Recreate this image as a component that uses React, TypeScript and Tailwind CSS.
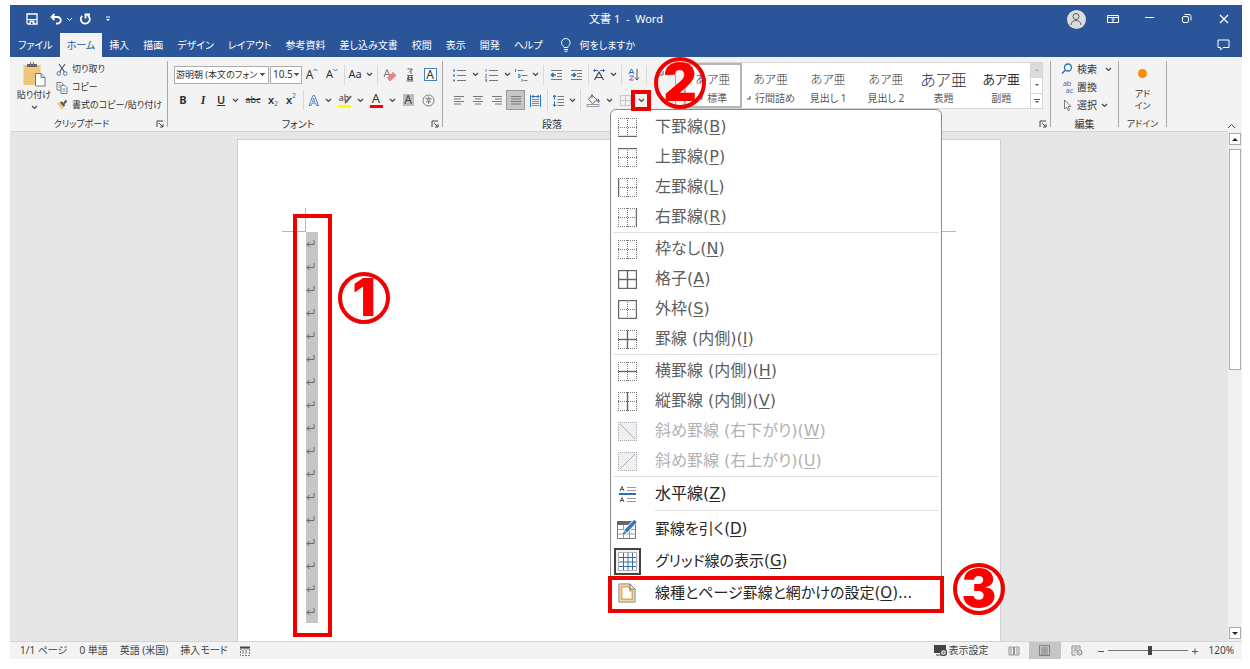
import React from 'react';

const TABS = ['ファイル', 'ホーム', '挿入', '描画', 'デザイン', 'レイアウト', '参考資料', '差し込み文書', '校閲', '表示', '開発', 'ヘルプ'];

const STYLES = [
  { name: '標準', sample: 'text-xs font-light', mark: true },
  { name: '行間詰め', sample: 'text-xs font-light', mark: true },
  { name: '見出し 1', sample: 'text-xs font-light' },
  { name: '見出し 2', sample: 'text-xs font-light' },
  { name: '表題', sample: 'text-base font-light' },
  { name: '副題', sample: 'text-[13px] font-normal' },
];

/* ---------- small shared pieces ---------- */

const Icon: React.FC<{ w?: number; h?: number; className?: string; children: React.ReactNode }> = ({
  w = 14,
  h = 14,
  className = '',
  children,
}) => (
  <svg width={w} height={h} viewBox={`0 0 ${w} ${h}`} fill="none" stroke="#5c5c5c" className={`shrink-0 ${className}`} aria-hidden="true">
    {children}
  </svg>
);

const Chevron = () => (
  <Icon w={7} h={5}>
    <path d="M1 1l2.5 2.5L6 1" stroke="#444" strokeWidth="1.2" />
  </Icon>
);

const Tool: React.FC<{ label: string; className?: string; children: React.ReactNode }> = ({ label, className = 'w-5', children }) => (
  <button type="button" aria-label={label} className={`flex h-5 shrink-0 items-center justify-center ${className}`}>
    {children}
  </button>
);

const More: React.FC<{ label: string }> = ({ label }) => (
  <Tool label={label} className="w-3">
    <Chevron />
  </Tool>
);

const Divider = () => <span className="mx-0.5 h-5 w-px shrink-0 bg-[#d8d8d8]" />;

const Group: React.FC<{ title?: string; launcher?: boolean; className?: string; children: React.ReactNode }> = ({
  title,
  launcher,
  className = '',
  children,
}) => (
  <section className={`my-1 flex shrink-0 flex-col border-r border-[#a9a9a9] ${className}`}>
    <div className="flex-1">{children}</div>
    <div className="flex h-1.5 items-center justify-end">
      {title && <span className="flex-1 text-center">{title}</span>}
      {launcher && (
        <button type="button" aria-label="ダイアログを表示" className="flex w-3.5 justify-center">
          <Icon w={8} h={8}>
            <path d="M7 1H1v6M3 3l4 4M7 4v3H4" stroke="#444" />
          </Icon>
        </button>
      )}
    </div>
  </section>
);

const Circle: React.FC<{ n: number; className: string }> = ({ n, className }) => (
  <span
    className={`absolute z-20 flex size-[52px] items-center justify-center rounded-full border-4 border-[#f00000] font-['Inter'] text-[52px] leading-none font-black text-[#ff0000] ${className}`}
  >
    {n}
  </span>
);

/* ---------- title bar ---------- */

const TitleBar = () => (
  <header className="bg-[#2a5699] text-white">
    <div className="grid h-7 grid-cols-3 items-center">
      <div className="flex items-center pl-4">
        <button type="button" aria-label="上書き保存" className="mr-3">
          <Icon w={12} h={12}>
            <path d="M1 1h10v10H2L1 10z" stroke="#fff" strokeWidth="1.3" />
            <path d="M1 6.5h10" stroke="#fff" />
            <path d="M3.5 7.5h5v3.5h-5z" fill="#fff" stroke="none" />
            <path d="M5 9h1.5v2H5z" fill="#2a5699" stroke="none" />
          </Icon>
        </button>
        <button type="button" aria-label="元に戻す">
          <Icon w={12} h={12}>
            <path d="M4.5 1L1.5 4l3 3M2 4h5.5a3 3 0 010 6.5H6" stroke="#fff" strokeWidth="1.8" />
          </Icon>
        </button>
        <button type="button" aria-label="元に戻すの履歴" className="mx-1">
          <Icon w={7} h={5}>
            <path d="M1 1l2.5 2.5L6 1" stroke="#fff" />
          </Icon>
        </button>
        <button type="button" aria-label="やり直し" className="ml-0.5">
          <Icon w={12} h={12}>
            <path d="M3.2 2.8A4.5 4.5 0 108.5 2.2M6.5 5.5V1.5H11" stroke="#fff" strokeWidth="1.8" />
          </Icon>
        </button>
        <button type="button" aria-label="クイック アクセス ツール バーのユーザー設定" className="ml-3.5">
          <Icon w={6} h={6}>
            <path d="M1 1h4" stroke="#fff" />
            <path d="M1 3h4L3 5z" fill="#fff" stroke="none" />
          </Icon>
        </button>
      </div>
      <h1 className="text-center text-[11px] whitespace-pre">文書 1  -  Word</h1>
      <div className="flex items-center justify-end gap-[21px] pr-3">
        <button type="button" aria-label="アカウント" className="flex size-[19px] items-center justify-center rounded-full bg-[#dcdcdc]">
          <Icon w={14} h={14}>
            <circle cx="7" cy="4.5" r="3" />
            <path d="M2 13c0-6 10-6 10 0" />
          </Icon>
        </button>
        <button type="button" aria-label="リボンの表示オプション">
          <Icon w={12} h={10}>
            <path d="M.5 1.5h11v7H.5zM.5 3.5h11M6 8V5M4.5 6L6 4.5 7.5 6" stroke="#fff" />
          </Icon>
        </button>
        <button type="button" aria-label="最小化" className="ml-1">
          <Icon w={12} h={10}>
            <path d="M1 3.5h9" stroke="#fff" />
          </Icon>
        </button>
        <button type="button" aria-label="元に戻す (縮小)" className="ml-1">
          <Icon w={12} h={10}>
            <rect x="1.5" y="2.5" width="6" height="6" rx="1.5" stroke="#fff" />
            <path d="M3.5.5h4.500q2 0 2 2v4" stroke="#fff" />
          </Icon>
        </button>
        <button type="button" aria-label="閉じる" className="ml-1">
          <Icon w={12} h={10}>
            <path d="M2 1l8 8M10 1L2 9" stroke="#fff" strokeWidth="1.2" />
          </Icon>
        </button>
      </div>
    </div>
    <nav className="flex h-6 items-stretch pl-px">
      {TABS.map((tab) => (
        <button
          key={tab}
          type="button"
          className={`px-[7px] whitespace-nowrap ${tab === 'ホーム' ? 'bg-[#f3f3f3] text-[#2a5699]' : ''}`}
        >
          {tab}
        </button>
      ))}
      <button type="button" className="ml-2.5 flex items-center gap-2 whitespace-nowrap">
        <Icon w={12} h={14}>
          <path d="M4 9.5C4 8 1.5 7.5 1.5 4.8a4.3 4.3 0 018.6 0C10.1 7.5 7.8 8 7.8 9.5zM4 11.5h4M4.5 13.3h3" stroke="#fff" />
        </Icon>
        何をしますか
      </button>
      <button type="button" aria-label="コメント" className="mr-3 ml-auto">
        <Icon w={13} h={12}>
          <path d="M1 1h11v7.5H6L3.5 11V8.5H1z" stroke="#fff" />
        </Icon>
      </button>
    </nav>
  </header>
);

/* ---------- ribbon groups ---------- */

const ClipboardGroup = () => (
  <Group title="クリップボード" launcher className="w-[158px] text-[9px]">
    <div className="flex pl-0.5">
      <button type="button" className="flex w-11 flex-col items-center whitespace-nowrap">
        <Icon w={24} h={26}>
          <path d="M1.5 4h17v20h-17z" fill="#eec57b" stroke="none" />
          <path d="M5 3h3V1.5h4V3h3v3H5z" fill="#666" stroke="none" />
          <path d="M9 2.5h2" stroke="#f3f3f3" />
          <path d="M13.5 12.5h5.5l4 4v8.5h-9.5z" fill="#fff" stroke="#777" />
          <path d="M19 12.5v4h4" stroke="#777" />
        </Icon>
        <span className="leading-4">貼り付け</span>
        <span className="flex h-2 items-center">
          <Chevron />
        </span>
      </button>
      <div className="-mt-px flex flex-col">
        <button type="button" className="flex h-[18px] items-center gap-1 whitespace-nowrap">
          <Icon w={12} h={13}>
            <path d="M3 1l5.5 8M9 1L3.5 9" stroke="#555" strokeWidth="1.2" />
            <circle cx="2.8" cy="10.5" r="1.8" stroke="#3f78b8" />
            <circle cx="9.2" cy="10.5" r="1.8" stroke="#3f78b8" />
          </Icon>
          切り取り
        </button>
        <button type="button" className="flex h-[18px] items-center gap-1 whitespace-nowrap">
          <Icon w={12} h={13}>
            <path d="M1 1.5h4.5l1.5 1.5v6H1z" fill="#fff" stroke="#777" />
            <path d="M5 4.5h4l2 2v6H5z" fill="#fff" stroke="#777" />
            <path d="M2.5 4h2M2.5 6h2M6.5 8h3M6.5 10h3" stroke="#4f86c6" />
          </Icon>
          コピー
        </button>
        <button type="button" className="flex h-[18px] items-center gap-1 whitespace-nowrap">
          <Icon w={12} h={12}>
            <path d="M1 4l4-1.5 3.5 4L6 11z" fill="#eec57b" stroke="none" />
            <path d="M5 3l3.5 4M8 4.5L10.5 1.5" stroke="#555" strokeWidth="2" />
          </Icon>
          書式のコピー/貼り付け
        </button>
      </div>
    </div>
  </Group>
);

const FontGroup = () => (
  <Group title="フォント" launcher className="w-[275px]">
    <div className="flex h-[27px] items-center pl-1.5">
      <select
        aria-label="フォント名"
        className="mr-px h-[18px] w-[95px] appearance-none border border-[#ababab] bg-white bg-[conic-gradient(from_315deg_at_50%_100%,#555_90deg,transparent_0)] bg-[length:5px_3px] bg-[position:right_3px_center] bg-no-repeat pl-px text-[9px] text-[#333]"
      >
        <option>游明朝 (本文のフォン</option>
      </select>
      <select
        aria-label="フォント サイズ"
        className="h-[18px] w-8 appearance-none border border-[#ababab] bg-white bg-[conic-gradient(from_315deg_at_50%_100%,#555_90deg,transparent_0)] bg-[length:5px_3px] bg-[position:right_2px_center] bg-no-repeat pl-0.5 text-[#333]"
      >
        <option>10.5</option>
      </select>
      <Tool label="フォント サイズの拡大">
        <span className="text-xs">A</span>
        <Icon w={5} h={4} className="mb-2.5">
          <path d="M.5 3l2-2 2 2" stroke="#2f6eb5" />
        </Icon>
      </Tool>
      <Tool label="フォント サイズの縮小">
        <span className="text-[11px]">A</span>
        <Icon w={5} h={4} className="mb-2.5">
          <path d="M.5 1l2 2 2-2" stroke="#2f6eb5" />
        </Icon>
      </Tool>
      <Divider />
      <Tool label="文字種の変換" className="w-4">
        <span className="text-[11px]">Aa</span>
      </Tool>
      <More label="文字種の変換のオプション" />
      <Divider />
      <Tool label="すべての書式をクリア">
        <Icon w={14} h={14}>
          <path d="M1 9l3-7.5L7 8M2 6.5h4" stroke="#777" />
          <path d="M4 9.5L10 4l3.5 3.5L7.5 13H6z" fill="#ec7f92" stroke="none" />
        </Icon>
      </Tool>
      <Tool label="ルビ">
        <Icon w={8} h={14}>
          <path d="M1.5 1h5L3 4.5M5 2.5V6M1 7.5h6M2.5 7.5v5M5.5 7.5v5M1.5 9.5h5v2h-5zM.5 13h7" stroke="#555" strokeWidth=".9" />
        </Icon>
      </Tool>
      <Tool label="囲み線">
        <span className="flex size-[13px] items-center justify-center border border-[#4a7ebb] bg-white text-xs leading-none text-[#333]">A</span>
      </Tool>
    </div>
    <div className="flex h-6 items-center pl-[5px]">
      <Tool label="太字">
        <b className="text-[11px]">B</b>
      </Tool>
      <Tool label="斜体">
        <i className="font-['Liberation_Serif'] text-xs font-bold">I</i>
      </Tool>
      <Tool label="下線" className="w-4">
        <u className="text-[11px] font-semibold">U</u>
      </Tool>
      <More label="下線のオプション" />
      <Tool label="取り消し線" className="w-6">
        <s className="text-[9px]">abc</s>
      </Tool>
      <Tool label="下付き" className="w-4">
        <span className="text-[11px] font-semibold">x</span>
        <span className="mt-2 text-[7px] text-[#2f6eb5]">2</span>
      </Tool>
      <Tool label="上付き">
        <span className="text-[11px] font-semibold">x</span>
        <span className="mb-2 text-[7px] text-[#2f6eb5]">2</span>
      </Tool>
      <Divider />
      <Tool label="文字の効果と体裁" className="w-4">
        <Icon w={12} h={13}>
          <path d="M1 11.5L5 1.5h1.5l4 10H8.5L7.5 9H4l-1 2.5z" fill="#fff" stroke="#3f7fc9" />
          <path d="M4.5 7.5l1.2-3.5L7 7.5z" stroke="#3f7fc9" strokeWidth=".8" />
        </Icon>
      </Tool>
      <More label="文字の効果のオプション" />
      <Tool label="蛍光ペンの色">
        <span className="relative flex h-[15px] w-[13px] flex-col justify-between">
          <span className="text-[9px] leading-[9px]">ab</span>
          <span className="h-[3px] bg-[#ffff00]" />
          <Icon w={8} h={9} className="absolute top-0.5 left-1.5">
            <path d="M7 1L3 6 1 8" stroke="#666" strokeWidth="2" />
          </Icon>
        </span>
      </Tool>
      <More label="蛍光ペンの色のオプション" />
      <Tool label="フォントの色">
        <span className="flex h-[15px] w-[13px] flex-col justify-between text-center">
          <span className="text-[13px] leading-[11px]">A</span>
          <span className="h-[3px] bg-[#f00]" />
        </span>
      </Tool>
      <More label="フォントの色のオプション" />
      <Tool label="文字の網かけ">
        <span className="flex h-3 w-[11px] items-center justify-center bg-[#bdbdbd] text-xs leading-none text-[#444]">A</span>
      </Tool>
      <Tool label="囲い文字">
        <Icon w={13} h={13}>
          <circle cx="6.5" cy="6.5" r="5.5" stroke="#777" />
          <path d="M6.5 2.5v1.5M4 5.5V4.3h5v1.2M5 5.8h3L6.5 7v3M4 7.8h5" stroke="#666" strokeWidth=".8" />
        </Icon>
      </Tool>
    </div>
  </Group>
);

const Lines: React.FC<{ rows: string }> = ({ rows }) => (
  <Icon w={14} h={14}>
    <path d={rows} stroke="#777" />
  </Icon>
);

const ParagraphGroup = () => (
  <Group title="段落" launcher className="w-[233px]">
    <div className="flex h-[27px] items-center pl-1.5">
      <Tool label="箇条書き">
        <Icon>
          <path d="M5 2.5h9M5 7.5h9M5 12.5h9" stroke="#777" />
          <path d="M1 2.5h2M1 7.5h2M1 12.5h2" stroke="#4f86c6" strokeWidth="2" />
        </Icon>
      </Tool>
      <More label="箇条書きのオプション" />
      <Tool label="段落番号">
        <Icon>
          <path d="M5 2.5h9M5 7.5h9M5 12.5h9" stroke="#777" />
          <path d="M2 1v3M1 6.5h1.5v1L1 9h2M1 11h1.5v1.5h-1 1V14H1" stroke="#4f86c6" strokeWidth=".9" />
        </Icon>
      </Tool>
      <More label="段落番号のオプション" />
      <Tool label="アウトライン" className="w-4">
        <Icon>
          <path d="M3.5 2.5h6M7.5 7.5h6M9.5 12.5h4" stroke="#777" />
          <path d="M1.5 1v3M4 6.5h2v3H4.5V8H6M8 11v3" stroke="#4f86c6" />
        </Icon>
      </Tool>
      <More label="アウトラインのオプション" />
      <Divider />
      <Tool label="インデントを減らす">
        <Icon w={13} h={12}>
          <path d="M1 1.5h11M7 4.5h5M7 7.5h5M1 10.5h11" stroke="#777" />
          <path d="M6 6H1.5M3.5 4l-2 2 2 2" stroke="#2f6eb5" strokeWidth="1.6" />
        </Icon>
      </Tool>
      <Tool label="インデントを増やす">
        <Icon w={13} h={12}>
          <path d="M1 1.5h11M7 4.5h5M7 7.5h5M1 10.5h11" stroke="#777" />
          <path d="M1 6h4.5M3.5 4l2 2-2 2" stroke="#2f6eb5" strokeWidth="1.6" />
        </Icon>
      </Tool>
      <Divider />
      <Tool label="拡張書式" className="w-4">
        <Icon w={14} h={13}>
          <path d="M2.5 12L7 4l4.5 8M4.5 9.5h5" stroke="#444" strokeWidth="1.2" />
          <path d="M6 2.5H1.5M3 1L1.5 2.5 3 4M8 2.5h4.5M11 1l1.5 1.5L11 4" stroke="#2f6eb5" />
        </Icon>
      </Tool>
      <More label="拡張書式のオプション" />
      <Divider />
      <Tool label="並べ替え">
        <Icon w={12} h={13}>
          <path d="M1 6l2.5-5L6 6M2 4.5h3" stroke="#2f6eb5" />
          <path d="M1.5 8h4l-4 4h4" stroke="#8b4fa8" />
          <path d="M9 1v11M7 9.5L9 12l2-2.5" stroke="#555" />
        </Icon>
      </Tool>
      <Divider />
      <Tool label="編集記号の表示/非表示">
        <Icon w={12} h={12}>
          <path d="M10 2v4H3M5 4L3 6l2 2" />
        </Icon>
      </Tool>
    </div>
    <div className="flex h-6 items-center pl-1.5">
      <Tool label="左揃え" className="w-[19px]">
        <Lines rows="M2 3.5h10M2 6h7M2 8.5h10M2 11h7" />
      </Tool>
      <Tool label="中央揃え" className="w-[19px]">
        <Lines rows="M2 3.5h10M4 6h6M2 8.5h10M4 11h6" />
      </Tool>
      <Tool label="右揃え" className="w-[19px]">
        <Lines rows="M2 3.5h10M5 6h7M2 8.5h10M5 11h7" />
      </Tool>
      <Tool label="両端揃え" className="w-[19px] border border-[#9a9a9a] bg-[#c6c6c6]">
        <Lines rows="M2 3.5h10M2 6h10M2 8.5h10M2 11h10" />
      </Tool>
      <Tool label="均等割り付け">
        <Icon w={13} h={13}>
          <path d="M3 5.5h7M3 7.5h7M3 9.5h7M3 11.5h7" stroke="#888" />
          <path d="M1.5 1v12M11.5 1v12M3 2.5h7M4.5 1L3 2.5 4.5 4M8.5 1L10 2.5 8.5 4" stroke="#2f6eb5" />
        </Icon>
      </Tool>
      <Divider />
      <Tool label="行と段落の間隔" className="w-4">
        <Icon w={12} h={13}>
          <path d="M5.5 2.5H12M5.5 5.5H12M5.5 8.5H12M5.5 11.5H12" stroke="#777" />
          <path d="M2.5 1v4.5M1 3l1.5-2L4 3M2.5 7.5V12M1 10.5l1.5 2 1.5-2" stroke="#2f6eb5" />
        </Icon>
      </Tool>
      <More label="行と段落の間隔のオプション" />
      <Divider />
      <Tool label="塗りつぶし">
        <Icon w={14} h={14}>
          <path d="M6 2l5 5-4.5 3.5-4-4zM6 5V1" stroke="#666" />
          <path d="M12 6c2 2 1 4 0 3z" fill="#2f6eb5" stroke="#2f6eb5" />
          <path d="M1 11.5h12v2H1z" fill="#fff" stroke="#999" />
        </Icon>
      </Tool>
      <More label="塗りつぶしのオプション" />
      <div className="relative flex">
        <Tool label="罫線">
          <Icon w={11} h={11} className="opacity-60">
            <path d="M.5.5h10v10H.5zM5.5.5v10M.5 5.5h10" stroke="#aaa" />
          </Icon>
        </Tool>
        <More label="罫線のオプション" />
        <BordersMenu />
        <span className="absolute top-0 left-4 z-20 h-[21px] w-5 border-4 border-[#ee0000]" />
        <Circle n={2} className="-top-[33px] left-[39px]" />
      </div>
    </div>
  </Group>
);

const StylesGroup = () => (
  <Group launcher className="min-w-0 flex-1">
    <div className="mt-px ml-[7px] flex h-[47px] w-[360px] border border-[#d5d5d5] bg-white">
      {STYLES.map((s, i) => (
        <button
          key={s.name}
          type="button"
          className={`flex min-w-0 flex-1 flex-col items-center justify-between overflow-hidden border-2 pb-0.5 whitespace-nowrap ${
            i === 0 ? 'border-[#b5b5b5]' : 'border-transparent'
          }`}
        >
          <span className={`flex h-7 items-center font-['Noto_Sans_CJK_JP'] text-[#333] ${s.sample}`}>あア亜</span>
          <span className="flex items-center gap-1 leading-3 text-[#555]">
            {s.mark && (
              <Icon w={5} h={5}>
                <path d="M4 0v3H1" stroke="#444" />
              </Icon>
            )}
            {s.name}
          </span>
        </button>
      ))}
      <div className="flex w-3 flex-col divide-y divide-[#d5d5d5] border-l border-[#d5d5d5]">
        <button type="button" aria-label="前の行" className="flex flex-1 items-center justify-center bg-[#dcdcdc]">
          <span className="border-x-2 border-b-2 border-x-transparent border-b-[#aaa]" />
        </button>
        <button type="button" aria-label="次の行" className="flex flex-1 items-center justify-center">
          <span className="border-x-2 border-t-2 border-x-transparent border-t-[#555]" />
        </button>
        <button type="button" aria-label="その他のスタイル" className="flex flex-1 flex-col items-center justify-center gap-px">
          <span className="h-px w-1.5 bg-[#555]" />
          <span className="border-x-2 border-t-2 border-x-transparent border-t-[#555]" />
        </button>
      </div>
    </div>
  </Group>
);

const EditGroup = () => (
  <Group title="編集" className="w-[68px]">
    <div className="-mt-px flex flex-col pl-2.5">
      <button type="button" className="flex h-[18px] items-center gap-1 whitespace-nowrap">
        <Icon w={12} h={12}>
          <circle cx="7" cy="4.5" r="3.5" stroke="#2f6eb5" strokeWidth="1.3" />
          <path d="M4.5 7L1 10.5" stroke="#2f6eb5" strokeWidth="1.5" />
        </Icon>
        <span className="mr-1">検索</span>
        <Chevron />
      </button>
      <button type="button" className="flex h-[18px] items-center gap-1 whitespace-nowrap">
        <span className="flex w-3 flex-col text-[7px] leading-[7px]">
          <span className="text-[#7a4f9a]">ab</span>
          <span className="text-right text-[#2f6eb5]">ac</span>
        </span>
        置換
      </button>
      <button type="button" className="flex h-[18px] items-center gap-1 whitespace-nowrap">
        <Icon w={12} h={12}>
          <path d="M3.5 1v9l2-2L7 11.5l1.5-.7L7 7.500h3z" fill="#fff" stroke="#777" />
        </Icon>
        選択
        <Chevron />
      </button>
    </div>
  </Group>
);

const AddinGroup = () => (
  <Group title="アドイン" className="w-12 text-[9px]">
    <button type="button" className="flex w-full flex-col items-center pt-2 leading-3">
      <span className="mb-2.5 size-[9px] rounded-full bg-[#ff8c00]" />
      <span>アド</span>
      <span>イン</span>
    </button>
  </Group>
);

/* ---------- borders drop-down ---------- */

type Edge = 't' | 'b' | 'l' | 'r' | 'h' | 'v' | 'down' | 'up';

const EDGE_PATHS: Record<Edge, string> = {
  t: 'M0 .5h19',
  b: 'M0 18.5h19',
  l: 'M.5 0v19',
  r: 'M18.5 0v19',
  h: 'M0 9.5h19',
  v: 'M9.5 0v19',
  down: 'M2 2l15 15',
  up: 'M2 17L17 2',
};

const BorderIcon: React.FC<{ edges: Edge[]; disabled?: boolean }> = ({ edges, disabled }) => (
  <Icon w={19} h={19}>
    {disabled && <path d="M0 0h19v19H0z" fill="#f3eef5" stroke="none" />}
    <path
      d={disabled ? 'M0 .5h19M0 18.5h19M.5 0v19M18.5 0v19' : 'M0 .5h19M0 18.5h19M.5 0v19M18.5 0v19M0 9.5h19M9.5 0v19'}
      stroke={disabled ? '#aaa' : '#777'}
      strokeDasharray="1 1"
    />
    {edges.map((e) => (
      <path key={e} d={EDGE_PATHS[e]} stroke={disabled ? '#aaa' : '#666'} strokeWidth={disabled ? 1 : 1.4} />
    ))}
  </Icon>
);

interface Item {
  text: string;
  k: string;
  edges: Edge[];
  disabled?: boolean;
}

const SECTIONS: Item[][] = [
  [
    { text: '下罫線', k: 'B', edges: ['b'] },
    { text: '上罫線', k: 'P', edges: ['t'] },
    { text: '左罫線', k: 'L', edges: ['l'] },
    { text: '右罫線', k: 'R', edges: ['r'] },
  ],
  [
    { text: '枠なし', k: 'N', edges: [] },
    { text: '格子', k: 'A', edges: ['t', 'b', 'l', 'r', 'h', 'v'] },
    { text: '外枠', k: 'S', edges: ['t', 'b', 'l', 'r'] },
    { text: '罫線 (内側)', k: 'I', edges: ['h', 'v'] },
  ],
  [
    { text: '横罫線 (内側)', k: 'H', edges: ['h'] },
    { text: '縦罫線 (内側)', k: 'V', edges: ['v'] },
    { text: '斜め罫線 (右下がり)', k: 'W', edges: ['down'], disabled: true },
    { text: '斜め罫線 (右上がり)', k: 'U', edges: ['up'], disabled: true },
  ],
];

const MenuRow: React.FC<{
  text: string;
  k: string;
  tail?: string;
  disabled?: boolean;
  className: string;
  icon: React.ReactNode;
}> = ({ text, k, tail = '', disabled, className, icon }) => (
  <button type="button" role="menuitem" disabled={disabled} className={`flex w-full items-center whitespace-nowrap ${className}`}>
    <span className="mr-3 flex w-8 justify-center">{icon}</span>
    <span>
      {text}(<u className="underline-offset-2">{k}</u>){tail}
    </span>
  </button>
);

const BordersMenu = () => (
  <div
    role="menu"
    aria-label="罫線"
    className="absolute top-[19px] -left-[5px] z-10 w-[332px] rounded-t-md border border-[#8a8a8a] bg-white pt-0.5 font-['DejaVu_Sans','Noto_Sans_CJK_JP',sans-serif] text-base"
  >
    {SECTIONS.map((items) => (
      <div key={items[0].k}>
        {items.map((it) => (
          <MenuRow
            key={it.k}
            text={it.text}
            k={it.k}
            disabled={it.disabled}
            className={it.disabled ? 'h-[30px] text-[#b1b1b1]' : 'h-[30px] text-[#5e5e5e]'}
            icon={<BorderIcon edges={it.edges} disabled={it.disabled} />}
          />
        ))}
        <div className="mx-0.5 mb-px h-px bg-[#e1e1e1]" />
      </div>
    ))}
    <MenuRow
      text="水平線"
      k="Z"
      className="h-8 text-[#262626]"
      icon={
        <Icon w={19} h={18}>
          <path d="M2 6l2-4.5L6 6M2.5 4.5h3M2 17l2-4.5L6 17M2.5 15.5h3" stroke="#555" />
          <path d="M9 2.5h9M9 5.5h9M9 13.5h9M9 16.5h9" stroke="#999" />
          <path d="M1 9h17" stroke="#2f6eb5" strokeWidth="2" />
        </Icon>
      }
    />
    <div className="mr-0.5 mb-0.5 ml-11 h-px bg-[#e1e1e1]" />
    <MenuRow
      text="罫線を引く"
      k="D"
      className="h-8 text-[15px] text-[#262626]"
      icon={
        <Icon w={20} h={20}>
          <path d="M.5 2.5h18v17H.5z" fill="#fff" stroke="#777" />
          <path d="M0 2h19v4H0z" fill="#666" stroke="none" />
          <path d="M.5 10.5h18M.5 15h18M6.5 6v13M12.5 6v13" stroke="#999" />
          <path d="M7 14L18.5 2" stroke="#fff" strokeWidth="5" />
          <path d="M8.5 12.5L18.5 2" stroke="#3a76b9" strokeWidth="3.5" />
          <path d="M6 15.5l1-3.5 2.5 2.2z" fill="#3a76b9" stroke="none" />
        </Icon>
      }
    />
    <MenuRow
      text="グリッド線の表示"
      k="G"
      className="h-8 text-[15px] text-[#262626]"
      icon={
        <span className="flex size-[27px] items-center justify-center border-2 border-[#444] bg-[#f3f3f3]">
          <Icon w={19} h={19}>
            <path d="M.5.5h18v18H.5z" fill="#fff" stroke="#666" strokeDasharray="1 1" />
            <path d="M5.5 1v17M10 1v17M14.5 1v17M1 5.5h17M1 10h17M1 14.5h17" stroke="#2f6eb5" />
          </Icon>
        </span>
      }
    />
    <div className="relative">
      <MenuRow
        text="線種とページ罫線と網かけの設定"
        k="O"
        tail="..."
        className="h-8 text-[15px] text-[#262626]"
        icon={
          <Icon w={18} h={20}>
            <path d="M1 1h11l5 5v13H1z" fill="#fff" stroke="#777" />
            <path d="M3.5 3.5H12v4h2.5v9h-11z" stroke="#e5aa51" strokeWidth="2" />
            <path d="M12 1v5h5z" fill="#fff" stroke="#777" />
          </Icon>
        }
      />
      <span className="absolute -inset-x-[3px] -top-px h-[37px] border-4 border-[#ee0000]" />
      <Circle n={3} className="-top-3.5 left-[342px]" />
    </div>
  </div>
);

/* ---------- document and status bar ---------- */

const DocumentArea = () => (
  <div className="flex min-h-0 flex-1 bg-[#e6e6e6]">
    <main className="min-w-0 flex-1 overflow-hidden border-t border-[#d4d4d4]">
      <article className="relative mx-auto mt-[7px] flex h-full w-[764px] justify-between border border-[#cfcfcf] bg-white px-11 pt-[68px]">
        <div className="flex">
          <div className="h-6 w-6 border-r border-b border-[#b8b8b8]" />
          <div className="mt-6">
            {Array.from({ length: 17 }, (_, i) => (
              <p key={i} className="flex h-[23px] w-3 items-center bg-[#c6c6c6]">
                <Icon w={9} h={8}>
                  <path d="M8 0v4.5H1M3.5 2L1 4.5 3.5 7" stroke="#666" />
                </Icon>
              </p>
            ))}
          </div>
        </div>
        <div className="h-6 w-6 border-b border-l border-[#b8b8b8]" />
        <span className="absolute top-[74px] left-[55px] h-[423px] w-[39px] border-4 border-[#ee0000]" />
        <Circle n={1} className="top-[132px] left-[100px]" />
      </article>
    </main>
    <div className="flex w-3.5 flex-col items-center justify-between bg-[#f0f0f0] py-0.5">
      <div>
        <button type="button" aria-label="上へスクロール" className="flex size-3 items-center justify-center border border-[#ababab] bg-white">
          <span className="border-x-[3px] border-b-[3px] border-x-transparent border-b-[#222]" />
        </button>
        <div className="mt-1 h-[221px] w-3 border border-[#ababab] bg-white" />
      </div>
      <button type="button" aria-label="下へスクロール" className="flex size-3 items-center justify-center border border-[#ababab] bg-white">
        <span className="border-x-[3px] border-t-[3px] border-x-transparent border-t-[#222]" />
      </button>
    </div>
  </div>
);

const StatusBar = () => (
  <footer className="flex h-[18px] shrink-0 items-center justify-between border-t border-[#d4d4d4] bg-[#f3f3f3] pr-2 pl-2.5 whitespace-nowrap text-[#444]">
    <div className="flex items-center gap-3">
      <span>1/1 ページ</span>
      <span>0 単語</span>
      <span>英語 (米国)</span>
      <span>挿入モード</span>
      <Icon w={10} h={10}>
        <path d="M0 1.5h10" stroke="#444" strokeWidth="2" />
        <path d="M.5 3h9v6.5h-9zM2 5h6M2 7h6" stroke="#777" strokeDasharray="2 1" />
      </Icon>
    </div>
    <div className="flex items-center">
      <button type="button" className="mr-2.5 flex items-center gap-px">
        <Icon w={14} h={11}>
          <path d="M0 0h12v8H0z" fill="#444" stroke="none" />
          <path d="M2 10h5" stroke="#444" />
          <circle cx="9.5" cy="7.5" r="3" fill="#f3f3f3" stroke="#444" strokeWidth="1.3" />
          <circle cx="9.5" cy="7.5" r=".8" />
        </Icon>
        表示設定
      </button>
      <button type="button" aria-label="閲覧モード" className="flex h-[17px] w-[30px] items-center justify-center">
        <Icon w={12} h={10}>
          <path d="M1 1h4.5v8H1zM6.5 1H11v8H6.5zM2 3h2M2 5h2M2 7h2M8 3h2M8 5h2M8 7h2" stroke="#888" strokeWidth=".9" />
        </Icon>
      </button>
      <button type="button" aria-label="印刷レイアウト" className="flex h-[17px] w-8 items-center justify-center bg-[#c6c6c6]">
        <Icon w={11} h={11}>
          <path d="M.5.5h10v10H.5zM2 3h7M2 5h7M2 7h7M2 9h7" stroke="#777" strokeWidth=".9" />
        </Icon>
      </button>
      <button type="button" aria-label="Web レイアウト" className="flex h-[17px] w-8 items-center justify-center">
        <Icon w={12} h={11}>
          <path d="M9 4V1H1v9h4M2.5 3h5M2.5 5h4M2.5 7h2" stroke="#888" />
          <circle cx="8.5" cy="7.5" r="2.5" stroke="#777" />
          <path d="M7 6.5l2 2" stroke="#777" />
        </Icon>
      </button>
      <button type="button" aria-label="縮小" className="ml-1">
        <Icon w={8} h={8}>
          <path d="M1 4.5h6" stroke="#555" />
        </Icon>
      </button>
      <input
        type="range"
        aria-label="ズーム"
        min={0}
        max={100}
        defaultValue={53}
        className="mx-[3px] h-px w-20 appearance-none bg-[#777] [&::-webkit-slider-thumb]:h-[9px] [&::-webkit-slider-thumb]:w-1 [&::-webkit-slider-thumb]:appearance-none [&::-webkit-slider-thumb]:bg-[#444]"
      />
      <button type="button" aria-label="拡大" className="mr-2.5">
        <Icon w={8} h={8}>
          <path d="M1 4.5h6M4 1.5v6" stroke="#555" />
        </Icon>
      </button>
      <span>120%</span>
    </div>
  </footer>
);

export default function App() {
  return (
    <div className="h-screen bg-white pt-[5px] pr-2 pb-2.5 pl-2.5">
      <div className="flex h-full flex-col font-['Noto_Sans','Noto_Sans_CJK_JP',sans-serif] text-[10px] text-[#333] [font-feature-settings:'palt']">
        <TitleBar />
        <div className="relative z-10 flex h-[74px] shrink-0 bg-[#f3f3f3]">
          <ClipboardGroup />
          <FontGroup />
          <div className="relative z-10 flex">
            <ParagraphGroup />
          </div>
          <StylesGroup />
          <EditGroup />
          <AddinGroup />
          <button type="button" aria-label="リボンを折りたたむ" className="mb-0.5 flex w-[75px] shrink-0 items-end justify-end pr-1.5">
            <Icon w={9} h={6}>
              <path d="M1 5l3.5-3.5L8 5" stroke="#444" />
            </Icon>
          </button>
        </div>
        <DocumentArea />
        <StatusBar />
      </div>
    </div>
  );
}
